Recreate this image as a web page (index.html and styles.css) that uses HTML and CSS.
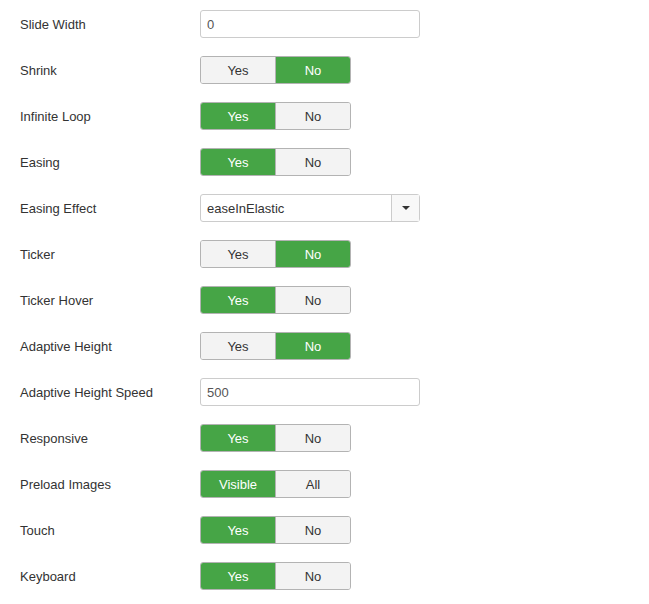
FILE: index.html
```html
<!DOCTYPE html>
<html lang="en">
<head>
    <meta charset="UTF-8">
    <title>Slider options</title>
    <link rel="stylesheet" href="styles.css">
</head>
<body>
    <form class="options">
        <div class="row">
            <label class="label">Slide Width</label>
            <input class="text_input" type="text" value="0">
        </div>
        <div class="row">
            <label class="label">Shrink</label>
            <div class="toggle"><span class="opt">Yes</span><span class="opt on">No</span></div>
        </div>
        <div class="row">
            <label class="label">Infinite Loop</label>
            <div class="toggle"><span class="opt on">Yes</span><span class="opt">No</span></div>
        </div>
        <div class="row">
            <label class="label">Easing</label>
            <div class="toggle"><span class="opt on">Yes</span><span class="opt">No</span></div>
        </div>
        <div class="row">
            <label class="label">Easing Effect</label>
            <div class="select">
                <span class="select_value">easeInElastic</span>
                <span class="select_arrow"><i class="caret"></i></span>
            </div>
        </div>
        <div class="row">
            <label class="label">Ticker</label>
            <div class="toggle"><span class="opt">Yes</span><span class="opt on">No</span></div>
        </div>
        <div class="row">
            <label class="label">Ticker Hover</label>
            <div class="toggle"><span class="opt on">Yes</span><span class="opt">No</span></div>
        </div>
        <div class="row">
            <label class="label">Adaptive Height</label>
            <div class="toggle"><span class="opt">Yes</span><span class="opt on">No</span></div>
        </div>
        <div class="row">
            <label class="label">Adaptive Height Speed</label>
            <input class="text_input" type="text" value="500">
        </div>
        <div class="row">
            <label class="label">Responsive</label>
            <div class="toggle"><span class="opt on">Yes</span><span class="opt">No</span></div>
        </div>
        <div class="row">
            <label class="label">Preload Images</label>
            <div class="toggle"><span class="opt on">Visible</span><span class="opt">All</span></div>
        </div>
        <div class="row">
            <label class="label">Touch</label>
            <div class="toggle"><span class="opt on">Yes</span><span class="opt">No</span></div>
        </div>
        <div class="row">
            <label class="label">Keyboard</label>
            <div class="toggle"><span class="opt on">Yes</span><span class="opt">No</span></div>
        </div>
    </form>
</body>
</html>
```
FILE: styles.css
```css
body {
    margin: 0;
    background: #fff;
    font-family: "Liberation Sans", Arial, sans-serif;
    font-size: 13px;
    color: #333;
}
.options {
    display: flex;
    flex-direction: column;
    gap: 18px;
    padding: 10px 20px;
}
.row {
    display: flex;
    align-items: center;
    height: 28px;
}
.label {
    width: 180px;
    color: #333;
}
.text_input {
    box-sizing: border-box;
    width: 220px;
    height: 28px;
    margin: 0;
    padding: 4px 6px;
    border: 1px solid #ccc;
    border-radius: 3px;
    font-family: inherit;
    font-size: 13px;
    color: #555;
    outline: none;
}
.toggle {
    display: flex;
    box-sizing: border-box;
    width: 151px;
    height: 28px;
    border: 1px solid #b3b3b3;
    border-radius: 3px;
    overflow: hidden;
}
.opt {
    flex: 1;
    display: flex;
    align-items: center;
    justify-content: center;
    background: #f3f3f3;
    color: #333;
}
.opt + .opt {
    border-left: 1px solid #b3b3b3;
}
.opt.on {
    background: #46a546;
    color: #fff;
}
.select {
    display: flex;
    box-sizing: border-box;
    width: 220px;
    height: 28px;
    border: 1px solid #ccc;
    border-radius: 3px;
    background: #fff;
}
.select_value {
    flex: 1;
    display: flex;
    align-items: center;
    padding-left: 6px;
    color: #333;
}
.select_arrow {
    width: 27px;
    display: flex;
    align-items: center;
    justify-content: center;
    border-left: 1px solid #ccc;
    background: #f8f8f8;
}
.caret {
    width: 0;
    height: 0;
    border-left: 4px solid transparent;
    border-right: 4px solid transparent;
    border-top: 4px solid #333;
}
```
